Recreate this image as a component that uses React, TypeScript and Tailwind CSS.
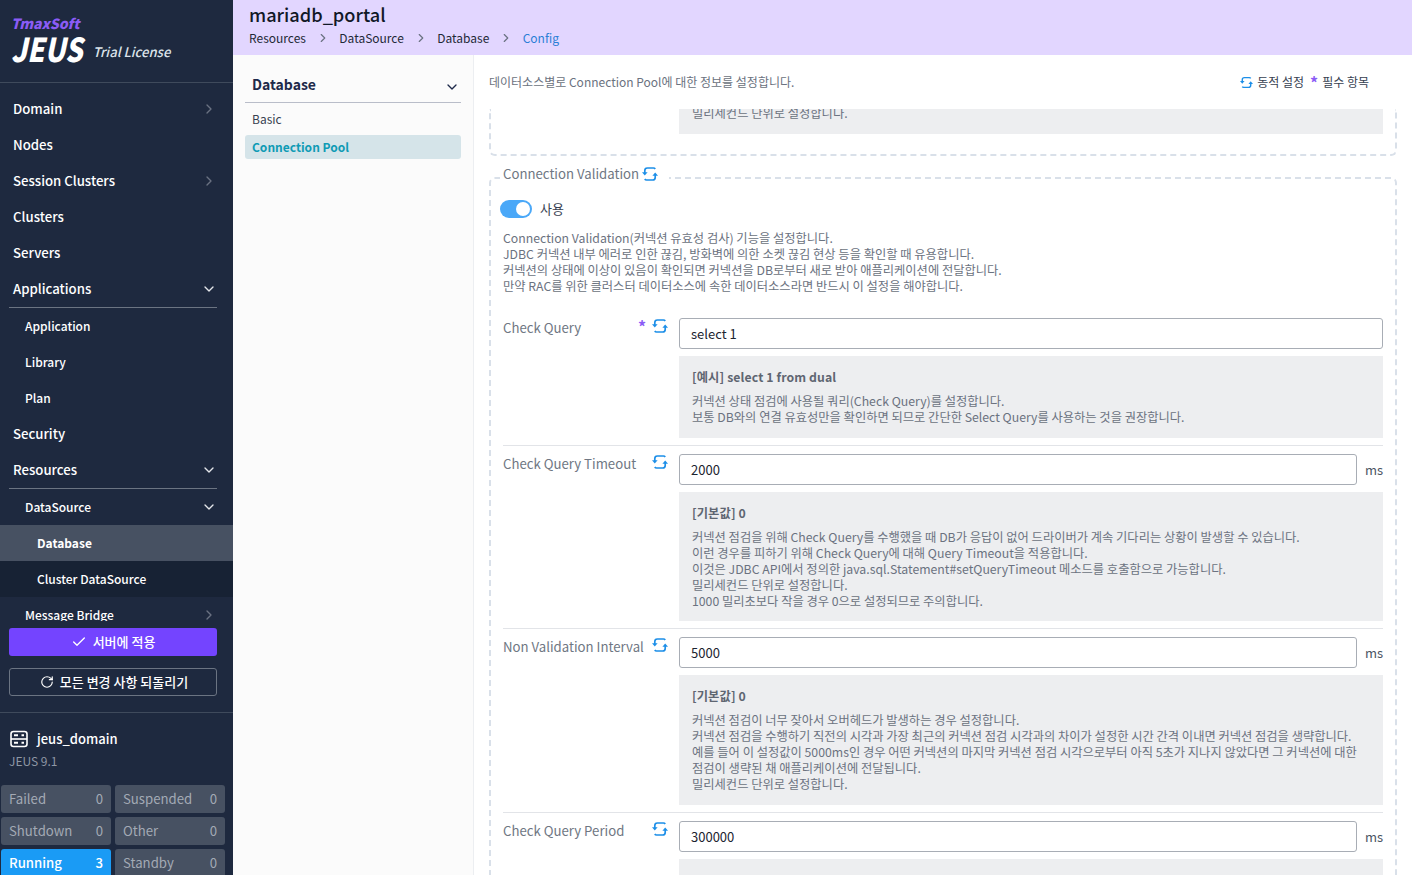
import { Check, ChevronDown, ChevronRight, RotateCw } from "lucide-react";
import { FC, ReactNode } from "react";

const FONT = "font-['Noto_Sans_CJK_KR','Noto_Sans',sans-serif]";

const SyncIcon: FC<{ className?: string }> = ({ className }) => (
  <svg viewBox="0 0 16 16" fill="none" stroke="currentColor" strokeWidth="1.7" className={className}>
    <path d="M2.8 7V4.6A2.6 2.6 0 0 1 5.4 2H11.5a2 2 0 0 1 1.7 1" />
    <path d="M0 6.2h5.6L2.8 9.6z" fill="currentColor" stroke="none" />
    <path d="M13.2 9v2.4a2.6 2.6 0 0 1-2.6 2.6H4.5a2 2 0 0 1-1.7-1" />
    <path d="M10.4 9.8H16L13.2 6.4z" fill="currentColor" stroke="none" />
  </svg>
);

type NavProps = {
  label: string;
  indent?: "none" | "one" | "two";
  icon?: "right" | "down";
  active?: boolean;
  dark?: boolean;
};

const NavItem: FC<NavProps> = ({ label, indent = "none", icon, active, dark }) => (
  <div
    className={`flex h-9 shrink-0 items-center justify-between pr-4 text-white ${
      indent === "none" ? "pl-[13px] text-[13.2px]" : indent === "one" ? "pl-[25px] text-xs" : "pl-[37px] text-xs"
    } ${active ? "bg-[#475162] font-bold" : dark ? "bg-[#172234] font-medium" : "font-medium"}`}
  >
    <span>{label}</span>
    {icon === "right" && <ChevronRight className="h-4 w-4 text-gray-500" />}
    {icon === "down" && <ChevronDown className="h-4 w-4 text-gray-200" />}
  </div>
);

const Stat: FC<{ label: string; value: number; on?: boolean }> = ({ label, value, on }) => (
  <div
    className={`flex h-7 items-center justify-between rounded-[3px] px-2 text-[13.2px] ${
      on ? "bg-[#1a9bf5] font-medium text-white" : "bg-[#475162] text-[#a3aab5]"
    }`}
  >
    <span>{label}</span>
    <span>{value}</span>
  </div>
);

const Sidebar: FC = () => (
  <aside className="flex h-[875px] w-[233px] shrink-0 flex-col overflow-hidden bg-[#1e293f]">
    <div className="h-[83px] shrink-0 border-b border-[#3f4a5c] pl-[11px] pt-4 italic">
      <div className="text-sm leading-[14px] font-black text-[#8b5cf6]">TmaxSoft</div>
      <div className="mt-[3px] flex items-end gap-[10px]">
        <span className="inline-block scale-y-[1.2] text-[27.5px] leading-[30px] font-black text-white">JEUS</span>
        <span className="pb-[1px] text-[13.1px] font-medium text-[#dbe2ea]">Trial License</span>
      </div>
    </div>
    <nav className="flex h-[538px] shrink-0 flex-col overflow-hidden pt-2">
      <NavItem label="Domain" icon="right" />
      <NavItem label="Nodes" />
      <NavItem label="Session Clusters" icon="right" />
      <NavItem label="Clusters" />
      <NavItem label="Servers" />
      <NavItem label="Applications" icon="down" />
      <div className="ml-[9px] mr-4 h-px shrink-0 bg-[#6b7482]" />
      <NavItem label="Application" indent="one" />
      <NavItem label="Library" indent="one" />
      <NavItem label="Plan" indent="one" />
      <NavItem label="Security" />
      <NavItem label="Resources" icon="down" />
      <div className="ml-[9px] mr-4 h-px shrink-0 bg-[#6b7482]" />
      <NavItem label="DataSource" indent="one" icon="down" />
      <NavItem label="Database" indent="two" active />
      <NavItem label="Cluster DataSource" indent="two" dark />
      <NavItem label="Message Bridge" indent="one" icon="right" />
    </nav>
    <div className="flex flex-col gap-3 pl-[9px] pr-4 pt-[7px]">
      <button className="flex h-7 items-center justify-center gap-[6px] rounded-[3px] bg-[#7444ff] text-[13px] font-medium text-white">
        <Check className="h-4 w-4" />
        서버에 적용
      </button>
      <button className="flex h-7 items-center justify-center gap-[6px] rounded-[3px] border border-[#6b7482] pl-[2px] text-[13px] font-medium text-white">
        <RotateCw className="h-[14px] w-[14px]" />
        모든 변경 사항 되돌리기
      </button>
    </div>
    <div className="mt-4 border-t border-[#3f4a5c] pt-4">
      <div className="flex items-center gap-[9px] px-[10px] text-[13px] font-medium text-white">
        <svg viewBox="0 0 18 18" fill="none" stroke="currentColor" strokeWidth="1.6" className="h-[18px] w-[18px]">
          <rect x="1" y="1.5" width="16" height="15" rx="2.5" />
          <path d="M1 9h16" />
          <path d="M4 5.2h4M11.5 5.2h2.5M4 12.8h4M11.5 12.8h2.5" strokeWidth="2" />
        </svg>
        <span>jeus_domain</span>
      </div>
      <div className="mt-[2px] px-[9px] text-xs leading-5 text-[#8e97a5]">JEUS 9.1</div>
      <div className="mt-[14px] grid grid-cols-2 gap-1 pl-px pr-2">
        <Stat label="Failed" value={0} />
        <Stat label="Suspended" value={0} />
        <Stat label="Shutdown" value={0} />
        <Stat label="Other" value={0} />
        <Stat label="Running" value={3} on />
        <Stat label="Standby" value={0} />
      </div>
    </div>
  </aside>
);

const Field: FC<{
  label: string;
  value: string;
  unit?: boolean;
  required?: boolean;
  help?: ReactNode;
  last?: boolean;
}> = ({ label, value, unit, required, help, last }) => (
  <div className={`flex ${last ? "" : "border-b border-[#e2e4e8] pb-[7px]"}`}>
    <div className="flex w-[176px] shrink-0 justify-between pr-[11px] text-[13.2px] leading-5 whitespace-nowrap text-[#6f7783]">
      <span>{label}</span>
      <span className="flex items-start gap-[6px]">
        {required && <span className="text-base leading-4 font-bold text-[#8b5cf6]">*</span>}
        <SyncIcon className="h-4 w-4 text-[#1d8fe8]" />
      </span>
    </div>
    <div className="min-w-0 flex-1">
      <div className="flex items-center gap-2">
        <div className="flex h-[31px] flex-1 items-center rounded-[3px] border border-[#a8adb5] bg-white px-[11px] pt-px text-[13px] text-[#1c2430]">
          {value}
        </div>
        {unit && <span className="pt-px text-[13px] text-[#4b5563]">ms</span>}
      </div>
      {help && (
        <div className="mt-[7px] bg-[#edeef0] p-[13px] text-[12.28px] leading-4 text-[#6b7280]">{help}</div>
      )}
    </div>
  </div>
);

const HelpTitle: FC<{ children: ReactNode }> = ({ children }) => (
  <div className="mb-2 font-bold tracking-[0.1px] text-[#5f6672]">{children}</div>
);

const ContentPanel: FC = () => (
  <main className="flex min-w-0 flex-1 flex-col overflow-hidden bg-white px-[15px]">
    <div className="flex h-[54px] shrink-0 items-center justify-between pr-[28px] text-xs text-[#6b7280]">
      <span>데이터소스별로 Connection Pool에 대한 정보를 설정합니다.</span>
      <span className="flex items-center gap-1 text-[#374151]">
        <SyncIcon className="h-[13px] w-[13px] text-[#1d8fe8]" />
        <span>동적 설정</span>
        <span className="ml-[2px] text-base leading-3 font-bold text-[#8b5cf6]">*</span>
        <span>필수 항목</span>
      </span>
    </div>
    <div className="h-[47px] shrink-0 rounded-b-md border-2 border-t-0 border-dashed border-[#d9e0e9] pl-[188px] pr-[12px]">
      <div className="h-[25px] overflow-hidden bg-[#edeef0] px-[13px] text-[12.28px] leading-4 text-[#6b7280]">
        <div className="-mt-[4px]">밀리세컨드 단위로 설정합니다.</div>
      </div>
    </div>
    <fieldset className="mt-2 rounded-md border-2 border-dashed border-[#d9e0e9] px-3 pb-4">
      <legend className="-ml-[3px] flex items-center gap-[3px] pb-2 pl-[3px] pr-[11px] text-[13.2px] leading-5 text-[#6f7783]">
        Connection Validation
        <SyncIcon className="h-4 w-4 text-[#1d8fe8]" />
      </legend>
      <div className="mt-[7px] -ml-[3px] flex items-center gap-2 text-[13px] text-[#374151]">
        <span className="flex h-[18px] w-8 items-center justify-end rounded-full bg-[#4aa8f8] pr-[2px]">
          <span className="h-[14px] w-[14px] rounded-full bg-white" />
        </span>
        사용
      </div>
      <p className="mt-[11px] mb-6 text-[12.28px] leading-4 text-[#6b7280]">
        Connection Validation(커넥션 유효성 검사) 기능을 설정합니다.
        <br />
        JDBC 커넥션 내부 에러로 인한 끊김, 방화벽에 의한 소켓 끊김 현상 등을 확인할 때 유용합니다.
        <br />
        커넥션의 상태에 이상이 있음이 확인되면 커넥션을 DB로부터 새로 받아 애플리케이션에 전달합니다.
        <br />
        만약 RAC를 위한 클러스터 데이터소스에 속한 데이터소스라면 반드시 이 설정을 해야합니다.
      </p>
      <div className="flex flex-col gap-2">
        <Field
          label="Check Query"
          value="select 1"
          required
          help={
            <>
              <HelpTitle>[예시] select 1 from dual</HelpTitle>
              커넥션 상태 점검에 사용될 쿼리(Check Query)를 설정합니다.
              <br />
              보통 DB와의 연결 유효성만을 확인하면 되므로 간단한 Select Query를 사용하는 것을 권장합니다.
            </>
          }
        />
        <Field
          label="Check Query Timeout"
          value="2000"
          unit
          help={
            <>
              <HelpTitle>[기본값] 0</HelpTitle>
              커넥션 점검을 위해 Check Query를 수행했을 때 DB가 응답이 없어 드라이버가 계속 기다리는 상황이 발생할 수 있습니다.
              <br />
              이런 경우를 피하기 위해 Check Query에 대해 Query Timeout을 적용합니다.
              <br />
              이것은 JDBC API에서 정의한 java.sql.Statement#setQueryTimeout 메소드를 호출함으로 가능합니다.
              <br />
              밀리세컨드 단위로 설정합니다.
              <div className="-mb-px">1000 밀리초보다 작을 경우 0으로 설정되므로 주의합니다.</div>
            </>
          }
        />
        <Field
          label="Non Validation Interval"
          value="5000"
          unit
          help={
            <>
              <HelpTitle>[기본값] 0</HelpTitle>
              커넥션 점검이 너무 잦아서 오버헤드가 발생하는 경우 설정합니다.
              <br />
              커넥션 점검을 수행하기 직전의 시각과 가장 최근의 커넥션 점검 시각과의 차이가 설정한 시간 간격 이내면 커넥션 점검을 생략합니다.
              <br />
              예를 들어 이 설정값이 5000ms인 경우 어떤 커넥션의 마지막 커넥션 점검 시각으로부터 아직 5초가 지나지 않았다면 그 커넥션에 대한 점검이 생략된 채 애플리케이션에 전달됩니다.
              <br />
              밀리세컨드 단위로 설정합니다.
            </>
          }
        />
        <Field label="Check Query Period" value="300000" unit last help={<div className="h-[200px]" />} />
      </div>
    </fieldset>
  </main>
);

export default function App() {
  return (
    <div className={`flex h-[875px] w-[1412px] overflow-hidden ${FONT}`}>
      <Sidebar />
      <div className="flex min-w-0 flex-1 flex-col">
        <header className="h-[55px] shrink-0 bg-[#e2d6ff] pl-4 pt-[2px]">
          <div className="text-[18.2px] leading-[24px] font-medium text-[#111827]">mariadb_portal</div>
          <div className="mt-[2px] flex items-center text-xs leading-5 text-[#1f2937]">
            <span>Resources</span>
            <ChevronRight className="mx-[9.7px] h-[14px] w-[14px] text-gray-500" />
            <span>DataSource</span>
            <ChevronRight className="mx-[9.7px] h-[14px] w-[14px] text-gray-500" />
            <span>Database</span>
            <ChevronRight className="mx-[9.7px] h-[14px] w-[14px] text-gray-500" />
            <span className="text-[#2b7fd6]">Config</span>
          </div>
        </header>
        <div className="flex min-h-0 flex-1">
          <section className="w-[241px] shrink-0 border-r border-[#eceef1] bg-[#fbfbfb] px-3 pt-[11px]">
            <div className="flex h-[37px] items-center justify-between border-b border-[#b9bdc9] pl-[7px] pr-[1px] text-sm font-bold text-[#1e2a4a]">
              <span>Database</span>
              <ChevronDown className="mt-[6px] h-4 w-4" />
            </div>
            <div className="mt-1 flex h-6 items-center pl-[7px] text-xs text-[#374151]">Basic</div>
            <div className="mt-1 flex h-6 items-center rounded-[3px] bg-[#d5e4e9] pl-[7px] text-xs font-bold text-[#0f9bb5]">
              Connection Pool
            </div>
          </section>
          <ContentPanel />
        </div>
      </div>
    </div>
  );
}
